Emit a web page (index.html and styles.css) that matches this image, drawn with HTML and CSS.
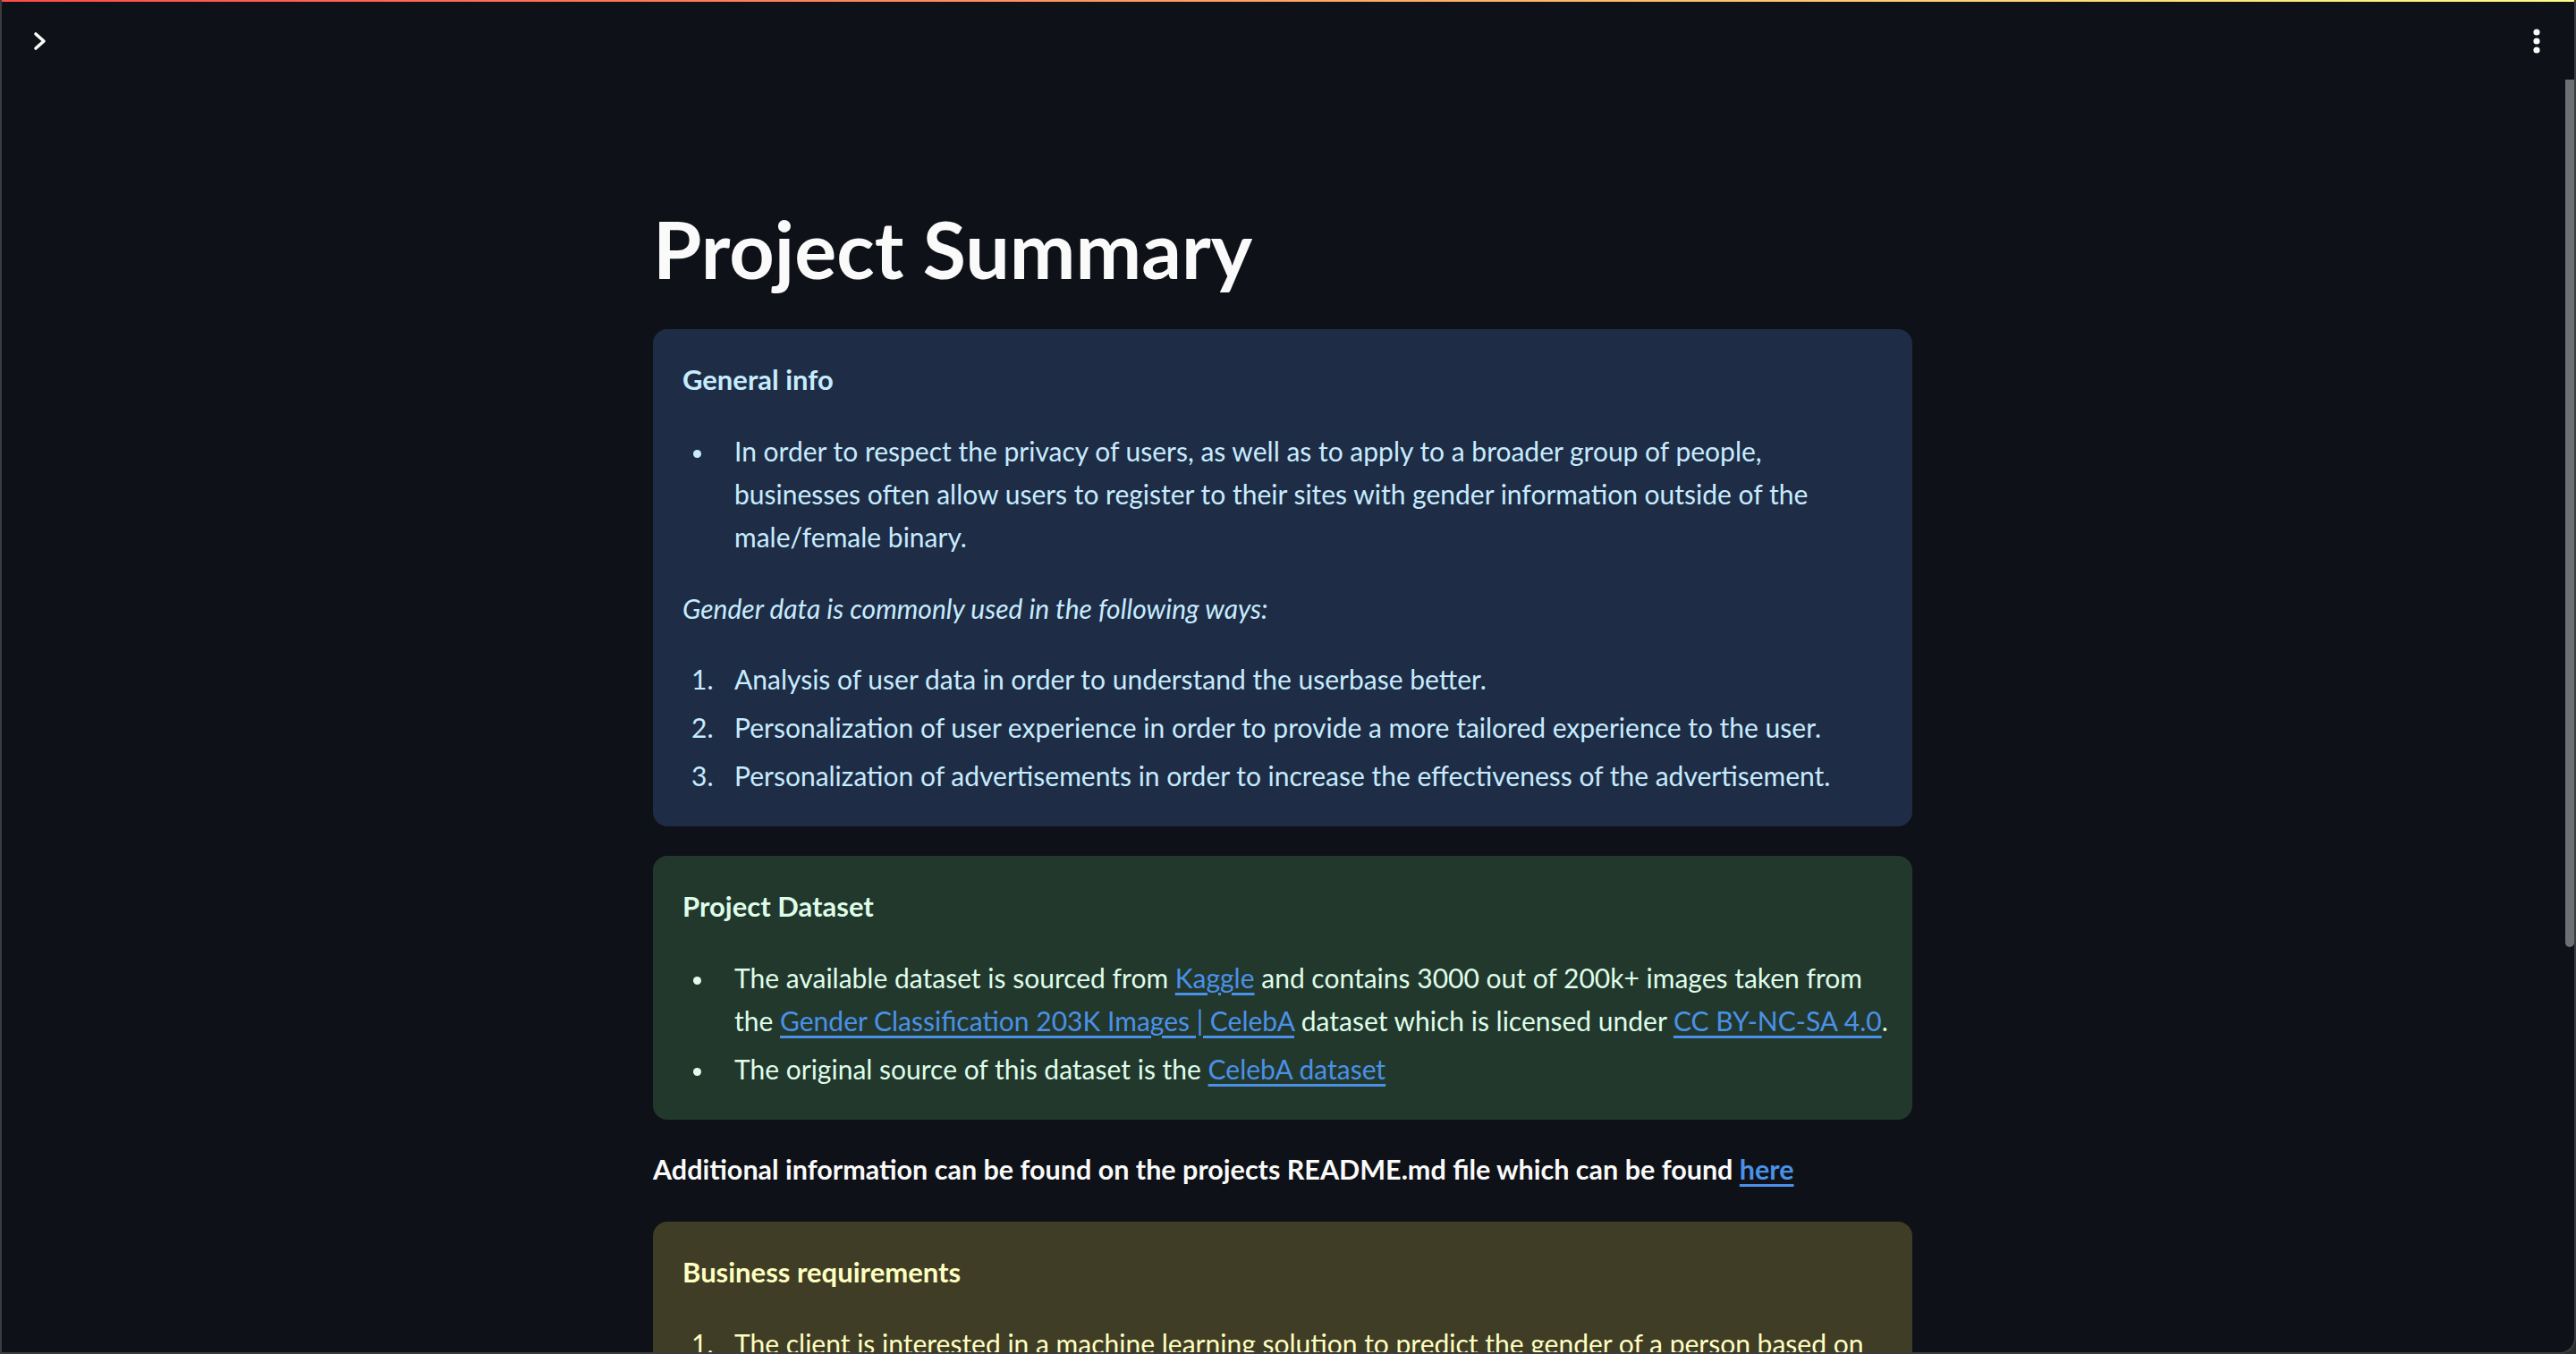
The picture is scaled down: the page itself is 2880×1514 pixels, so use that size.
FILE: index.html
```html
<!DOCTYPE html>
<html lang="en">
<head>
<meta charset="utf-8">
<title>Project Summary</title>
<link rel="stylesheet" href="styles.css">
</head>
<body>
<div class="app">
  <div class="decoration"></div>
  <header class="topbar">
    <button class="icon-btn sidebar-toggle" aria-label="Open sidebar">
      <svg width="20" height="24" viewBox="0 0 20 24"><path d="M4 4 L13 12 L4 20" fill="none" stroke="#fafafa" stroke-width="3.6" stroke-linecap="round" stroke-linejoin="round"/></svg>
    </button>
    <button class="icon-btn menu" aria-label="Main menu">
      <svg width="8" height="28" viewBox="0 0 8 28" fill="#fafafa"><circle cx="4" cy="4" r="3.6"/><circle cx="4" cy="14" r="3.6"/><circle cx="4" cy="24" r="3.6"/></svg>
    </button>
  </header>
  <main class="main">
    <div class="block">
      <h1 class="page-title">Project Summary</h1>

      <div class="alert info">
        <p class="alert-title">General info</p>
        <ul class="bullets">
          <li>In order to respect the privacy of users, as well as to apply to a broader group of people,<br>businesses often allow users to register to their sites with gender information outside of the<br>male/female binary.</li>
        </ul>
        <p class="lead"><em>Gender data is commonly used in the following ways:</em></p>
        <ol class="numbers">
          <li>Analysis of user data in order to understand the userbase better.</li>
          <li>Personalization of user experience in order to provide a more tailored experience to the user.</li>
          <li>Personalization of advertisements in order to increase the effectiveness of the advertisement.</li>
        </ol>
      </div>

      <div class="alert success">
        <p class="alert-title">Project Dataset</p>
        <ul class="bullets">
          <li>The available dataset is sourced from <a href="#">Kaggle</a> and contains 3000 out of 200k+ images taken from<br>the <a href="#">Gender Classification 203K Images | CelebA</a> dataset which is licensed under <a href="#">CC BY-NC-SA 4.0</a>.</li>
          <li>The original source of this dataset is the <a href="#">CelebA dataset</a></li>
        </ul>
      </div>

      <p class="note">Additional information can be found on the projects README.md file which can be found <a href="#">here</a></p>

      <div class="alert warning">
        <p class="alert-title">Business requirements</p>
        <ol class="numbers">
          <li>The client is interested in a machine learning solution to predict the gender of a person based on<br>an image of their face.</li>
          <li>The client is interested in understanding which facial features the model relies on.</li>
        </ol>
      </div>
    </div>
  </main>
  <div class="scroll-thumb"></div>
</div>
</body>
</html>
```

FILE: styles.css
```css
* { box-sizing: border-box; }

html, body {
  margin: 0;
  padding: 0;
  background: #2c2c2e;
}

body {
  font-family: Lato, "Noto Sans", "Liberation Sans", sans-serif;
  color: #fafafa;
}

.app {
  position: relative;
  width: 2880px;
  height: 1514px;
  overflow: hidden;
  background: #0e1117;
  border-left: 2px solid #3b3c40;
  border-right: 2px solid #3b3c40;
  border-bottom: 2px solid #3b3c40;
  border-bottom-right-radius: 18px;
}

.decoration {
  position: absolute;
  top: 0;
  left: -2px;
  right: -2px;
  height: 2px;
  background: linear-gradient(90deg, #ff4b4b, #fffd80);
  z-index: 5;
}

.topbar {
  position: absolute;
  top: 0;
  left: 0;
  right: 0;
  height: 92px;
  display: flex;
  align-items: center;
  justify-content: space-between;
  padding: 0 38px 0 34px;
  z-index: 4;
}

.icon-btn {
  background: none;
  border: 0;
  padding: 0;
  margin: 0;
  display: flex;
  cursor: pointer;
}

.main {
  height: 100%;
  padding: 226px 12px 0 0;
}

.block {
  width: 1408px;
  margin: 0 auto;
  display: flex;
  flex-direction: column;
  gap: 33px;
}

.page-title {
  margin: 0 0 3px;
  font-size: 88px;
  font-weight: 700;
  line-height: 1.2;
  color: #fafafa;
}

.alert {
  border-radius: 16px;
  padding: 32px 16px 33px 33px;
  font-size: 30px;
  line-height: 48px;
}

.alert p { margin: 0; }

.alert li { white-space: nowrap; }

.alert-title {
  font-weight: 700;
  font-size: 31px;
  margin-bottom: 32px !important;
}

.info { background: #1e2d45; color: #c7ebff; }
.success { background: #23382d; color: #dffde9; }
.warning { background: #3f3d25; color: #ffffc2; }

.bullets, .numbers {
  list-style: none;
  margin: 0;
  padding: 0 0 0 58px;
}

.bullets li, .numbers li {
  position: relative;
}

.bullets li + li, .numbers li + li {
  margin-top: 6px;
}

.bullets li::before {
  content: "";
  position: absolute;
  left: -46px;
  top: 23px;
  width: 9px;
  height: 9px;
  border-radius: 50%;
  background: currentColor;
}

.numbers { counter-reset: item; }
.numbers li { counter-increment: item; }
.numbers li::before {
  content: counter(item) ".";
  position: absolute;
  left: -48px;
  top: 0;
}

.info .bullets { margin-bottom: 32px; }
.lead { margin-bottom: 31px !important; }

a {
  color: #4a91e7;
  text-decoration: underline;
  text-decoration-thickness: 3px;
  text-underline-offset: 5px;
}

.note {
  margin: 0 0 4px;
  font-size: 30.5px;
  font-weight: 700;
  line-height: 44px;
}

.scroll-thumb {
  position: absolute;
  right: 0;
  top: 89px;
  width: 10px;
  height: 970px;
  background: #6e6f74;
  border-radius: 0 0 5px 5px;
  z-index: 6;
}
```
